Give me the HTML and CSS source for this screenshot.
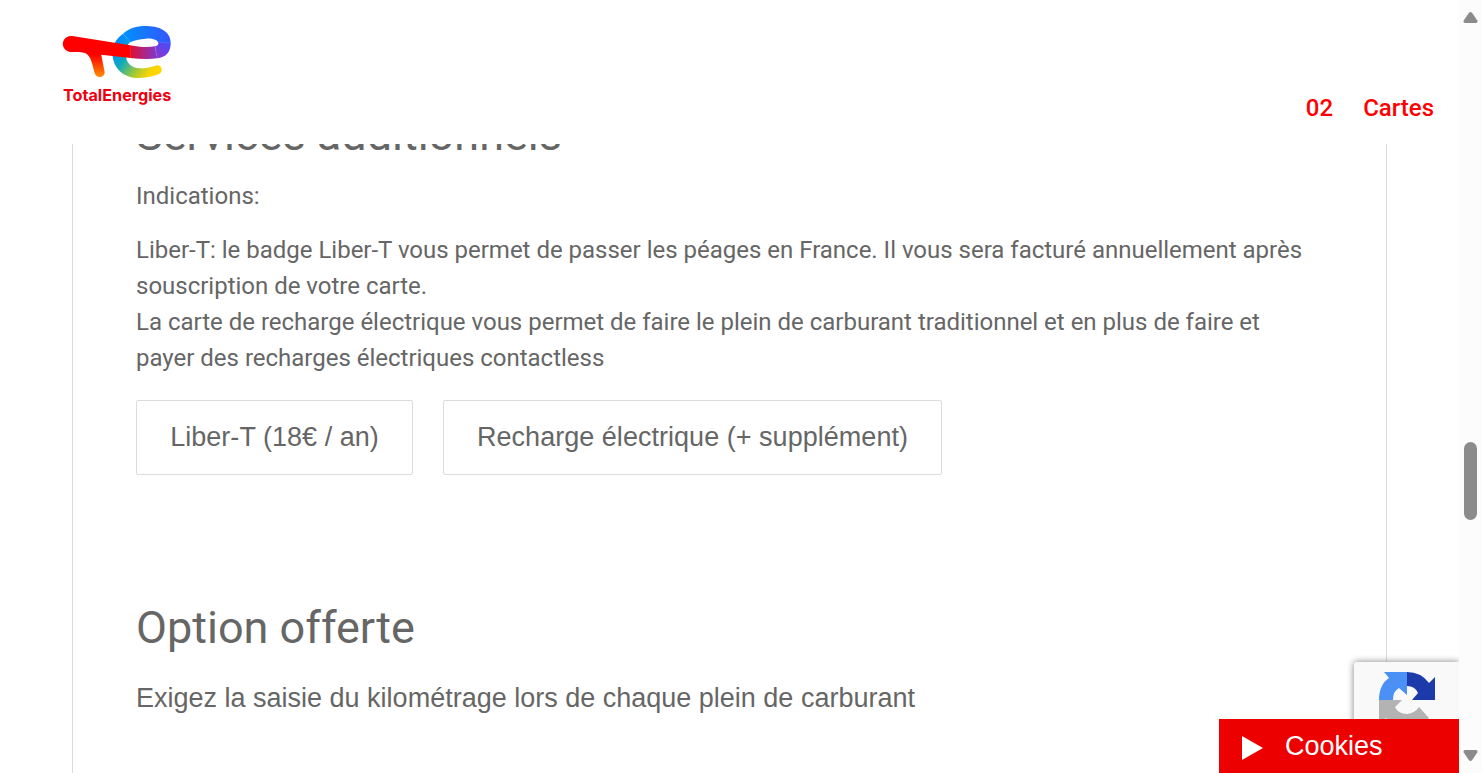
FILE: index.html
```html
<!DOCTYPE html>
<html lang="fr">
<head>
<meta charset="utf-8">
<title>TotalEnergies</title>
<link rel="stylesheet" href="styles.css">
</head>
<body>
<div class="page">
  <header class="header">
    <svg class="logo" viewBox="0 0 420 300" role="img" aria-label="TotalEnergies">
      <defs>
        <linearGradient id="top" gradientUnits="userSpaceOnUse" x1="220" y1="0" x2="360" y2="0"><stop offset="0" stop-color="#0090ff"/><stop offset="1" stop-color="#3456ff"/></linearGradient>
        <linearGradient id="right" gradientUnits="userSpaceOnUse" x1="350" y1="85" x2="325" y2="115"><stop offset="0" stop-color="#4a4cf5"/><stop offset="1" stop-color="#8038d8"/></linearGradient>
        <linearGradient id="mid" gradientUnits="userSpaceOnUse" x1="240" y1="0" x2="320" y2="0"><stop offset="0" stop-color="#e01030"/><stop offset="1" stop-color="#8038cc"/></linearGradient>
        <linearGradient id="bottom" gradientUnits="userSpaceOnUse" x1="195" y1="95" x2="300" y2="175"><stop offset="0" stop-color="#008cff"/><stop offset=".35" stop-color="#10aabb"/><stop offset=".7" stop-color="#9cc93b"/><stop offset="1" stop-color="#ffd500"/></linearGradient>
        <linearGradient id="leg" gradientUnits="userSpaceOnUse" x1="0" y1="120" x2="0" y2="185"><stop offset="0" stop-color="#f00"/><stop offset="1" stop-color="#ff8c00"/></linearGradient>
      </defs>
      <path fill="url(#bottom)" d="M219 56C195 73 187 94 187 116C190 164 224 190 269 189C292 188 311 184 327 177C341 170 336 149 320 151C302 158 289 161 270 160C244 159 226 143 228 117C229 100 232 88 241 80Z"/>
      <path fill="url(#top)" d="M219 56C239 38 263 32 291 33C336 34 364 54 362 87L325 84C323 75 309 70 288 71C268 72 252 76 241 82Z"/>
      <path fill="url(#right)" d="M362 84C362 112 348 127 321 130L315 94C323 92 326 89 325 81Z"/>
      <path fill="url(#mid)" d="M240 91L270 95Q296 97 315 94L322 130Q288 134 240 129Z"/>
      <path fill="url(#leg)" d="M84 109C121 112 123 132 134 174C138 192 164 189 164 172L153 116Z"/>
      <path fill="#f00" d="M67 63L241 91V129L153 119L88 111H62C32 108 30 66 62 63Z"/>
      <path fill="none" stroke="#fff" stroke-opacity=".35" d="M220 56L241 81M315 94L322 129M325 81L361 85M241 91V129"/>
      <text x="39" y="258" textLength="325" lengthAdjust="spacingAndGlyphs" class="wordmark">TotalEnergies</text>
    </svg>
    <div class="step"><span>02</span><span>Cartes</span></div>
  </header>
  <main class="panel">
    <h2 class="title">Services additionnels</h2>
    <p class="hint">Indications:</p>
    <p class="copy">Liber-T: le badge Liber-T vous permet de passer les péages en France. Il vous sera facturé annuellement après<br>souscription de votre carte.<br>La carte de recharge électrique vous permet de faire le plein de carburant traditionnel et en plus de faire et<br>payer des recharges électriques contactless</p>
    <div class="options">
      <button class="option" type="button">Liber-T (18€ / an)</button>
      <button class="option option-wide" type="button">Recharge électrique (+ supplément)</button>
    </div>
    <h2 class="title title-offer">Option offerte</h2>
    <p class="question">Exigez la saisie du kilométrage lors de chaque plein de carburant</p>
  </main>
</div>
<aside class="captcha">
  <svg class="captcha-icon" viewBox="0 0 56 57" aria-hidden="true">
    <path fill="#4a90f5" d="M0 28C0 17 4 10 10 6L5 0H28V23L20 16Q14 19 14 28Z"/>
    <path fill="#1c3aa9" d="M28 0Q42 0 50 11L56 5V28H33L39 21Q36 14 28 14Z"/>
    <path fill="#b3b3b3" d="M0 28H23L16 35Q19 42 28 42Q36 41 40 35L50 46Q42 57 28 57Q15 56 7 46L0 51Z"/>
  </svg>
</aside>
<button class="cookies" type="button"><svg class="play" viewBox="0 0 21 24" aria-hidden="true"><path fill="#fff" d="M0 0L21 12L0 24Z"/></svg><span>Cookies</span></button>
<div class="scrollbar">
  <svg class="arrow" viewBox="0 0 15 11"><path d="M6 .8Q7.500-.6 9 .8L14.300 8.500Q15 10.800 13 11H2Q0 10.800.7 8.500Z"/></svg>
  <div class="thumb"></div>
  <svg class="arrow arrow-down" viewBox="0 0 15 11"><path d="M6 .8Q7.500-.6 9 .8L14.300 8.500Q15 10.800 13 11H2Q0 10.800.7 8.500Z"/></svg>
</div>
</body>
</html>
```
FILE: styles.css
```css
* { box-sizing: border-box; }
body { margin: 0; height: 773px; overflow: hidden; display: flex; background: #fff; color: #666; font-family: Roboto, sans-serif; }
.page { width: 1459px; height: 773px; overflow: hidden; }
.header { position: relative; z-index: 1; display: flex; justify-content: space-between; height: 144px; padding: 15px 25px 0 50px; background: #fff; }
.logo { width: 140px; height: 100px; }
.wordmark { font: 700 49px Inter, sans-serif; fill: #f00010; }
.step { display: flex; gap: 30px; margin-top: 75px; height: 36px; color: #f00; font-size: 24px; font-weight: 500; line-height: 36px; }
.panel { width: 1315px; height: 700px; margin: -36px 0 0 72px; padding: 0 63px; border: 1px solid #dcdcdc; border-width: 0 1px; }
.title { margin: 0; font-size: 45px; font-weight: 400; line-height: 54px; white-space: nowrap; }
.hint { margin: 16px 0 18px; font-size: 24px; line-height: 36px; }
.copy { margin: 0; font-size: 24px; line-height: 36px; letter-spacing: -.008px; white-space: nowrap; }
.options { display: flex; gap: 30px; margin-top: 24px; }
.option { width: 277px; height: 75px; padding: 0; border: 1px solid #dcdcdc; border-radius: 2px; background: #fff; color: #666; font: 27px "Liberation Sans", sans-serif; letter-spacing: .03px; white-space: nowrap; }
.option-wide { width: 499px; }
.title-offer { margin-top: 126px; }
.question { margin: 23px 0 0; font: 27px/40px "Liberation Sans", sans-serif; white-space: nowrap; }
.captcha { position: absolute; left: 1354px; top: 662px; width: 105px; height: 80px; padding: 10px 25px; overflow: hidden; clip-path: inset(-8px 0 0 -8px); border-radius: 3px 0 0 3px; background: #f9f9f9; box-shadow: 0 0 7px #808080; }
.captcha-icon { display: block; width: 56px; height: 57px; }
.cookies { position: absolute; left: 1219px; top: 719px; width: 240px; height: 54px; display: flex; align-items: center; gap: 22px; padding: 0 0 0 23px; border: 0; background: #ed0000; color: #fff; font: 27px "Liberation Sans", sans-serif; }
.play { width: 21px; height: 24px; margin-top: 4px; }
.scrollbar { width: 23px; height: 773px; padding: 12px 4px; display: flex; flex-direction: column; background: #fcfcfc; }
.arrow { width: 15px; height: 11px; fill: #8b8b8b; }
.thumb { width: 13px; height: 78px; margin: 419px 0 auto 1px; border-radius: 7px; background: #8b8b8b; }
.arrow-down { transform: rotate(180deg); }
```
